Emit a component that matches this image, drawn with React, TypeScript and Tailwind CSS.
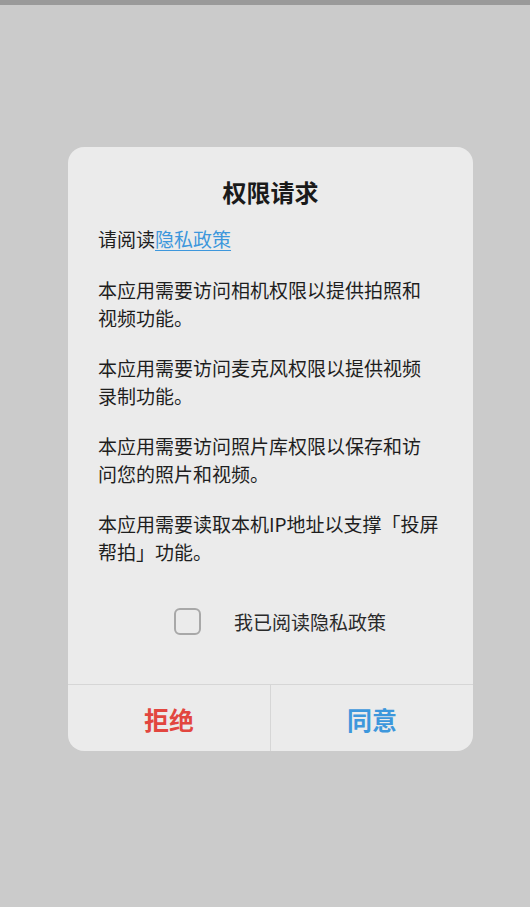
import React from "react";

export default function App() {
  const font = { fontFamily: '"Noto Sans CJK SC", "Noto Sans", sans-serif' };
  return (
    <div className="w-[530px] h-[907px] bg-[#cbcbcb] flex flex-col" style={font}>
      <div className="h-[5px] bg-[#9a9a9a] shrink-0" />
      <div className="flex-1 flex justify-start pl-[68px] pt-[142px]">
        <div className="w-[405px] h-[604px] bg-[#ebebeb] rounded-[16px] flex flex-col overflow-hidden">
          <div className="pt-[29px] px-[30px] flex flex-col">
            <h1 className="text-center text-[24px] leading-[32px] font-bold text-[#1a1a1a]">权限请求</h1>
            <p className="mt-[17px] text-[19px] leading-[28px] text-[#1e1e1e]">
              请阅读<span className="text-[#3d97dc] underline underline-offset-[3px]">隐私政策</span>
            </p>
            <div className="mt-[23px] flex flex-col gap-[22px] text-[19px] leading-[28px] text-[#1e1e1e]">
              <p>本应用需要访问相机权限以提供拍照和<br />视频功能。</p>
              <p>本应用需要访问麦克风权限以提供视频<br />录制功能。</p>
              <p>本应用需要访问照片库权限以保存和访<br />问您的照片和视频。</p>
              <p>本应用需要读取本机IP地址以支撑「投屏<br />帮拍」功能。</p>
            </div>
          </div>
          <div className="mt-[40px] h-[30px] flex items-center pl-[106px]">
            <div className="w-[27px] h-[27px] rounded-[6px] border-2 border-[#a8a8a8]" />
            <span className="ml-[33px] text-[19px] leading-[27px] text-[#2a2a2a]">我已阅读隐私政策</span>
          </div>
          <div className="mt-auto h-[67px] border-t border-[#d6d6d6] flex">
            <button className="flex-1 flex items-center justify-center pt-[3px] text-[25px] font-bold text-[#e2463f]">拒绝</button>
            <div className="w-px bg-[#d6d6d6]" />
            <button className="flex-1 flex items-center justify-center pt-[3px] text-[25px] font-bold text-[#3d97dc]">同意</button>
          </div>
        </div>
      </div>
    </div>
  );
}
